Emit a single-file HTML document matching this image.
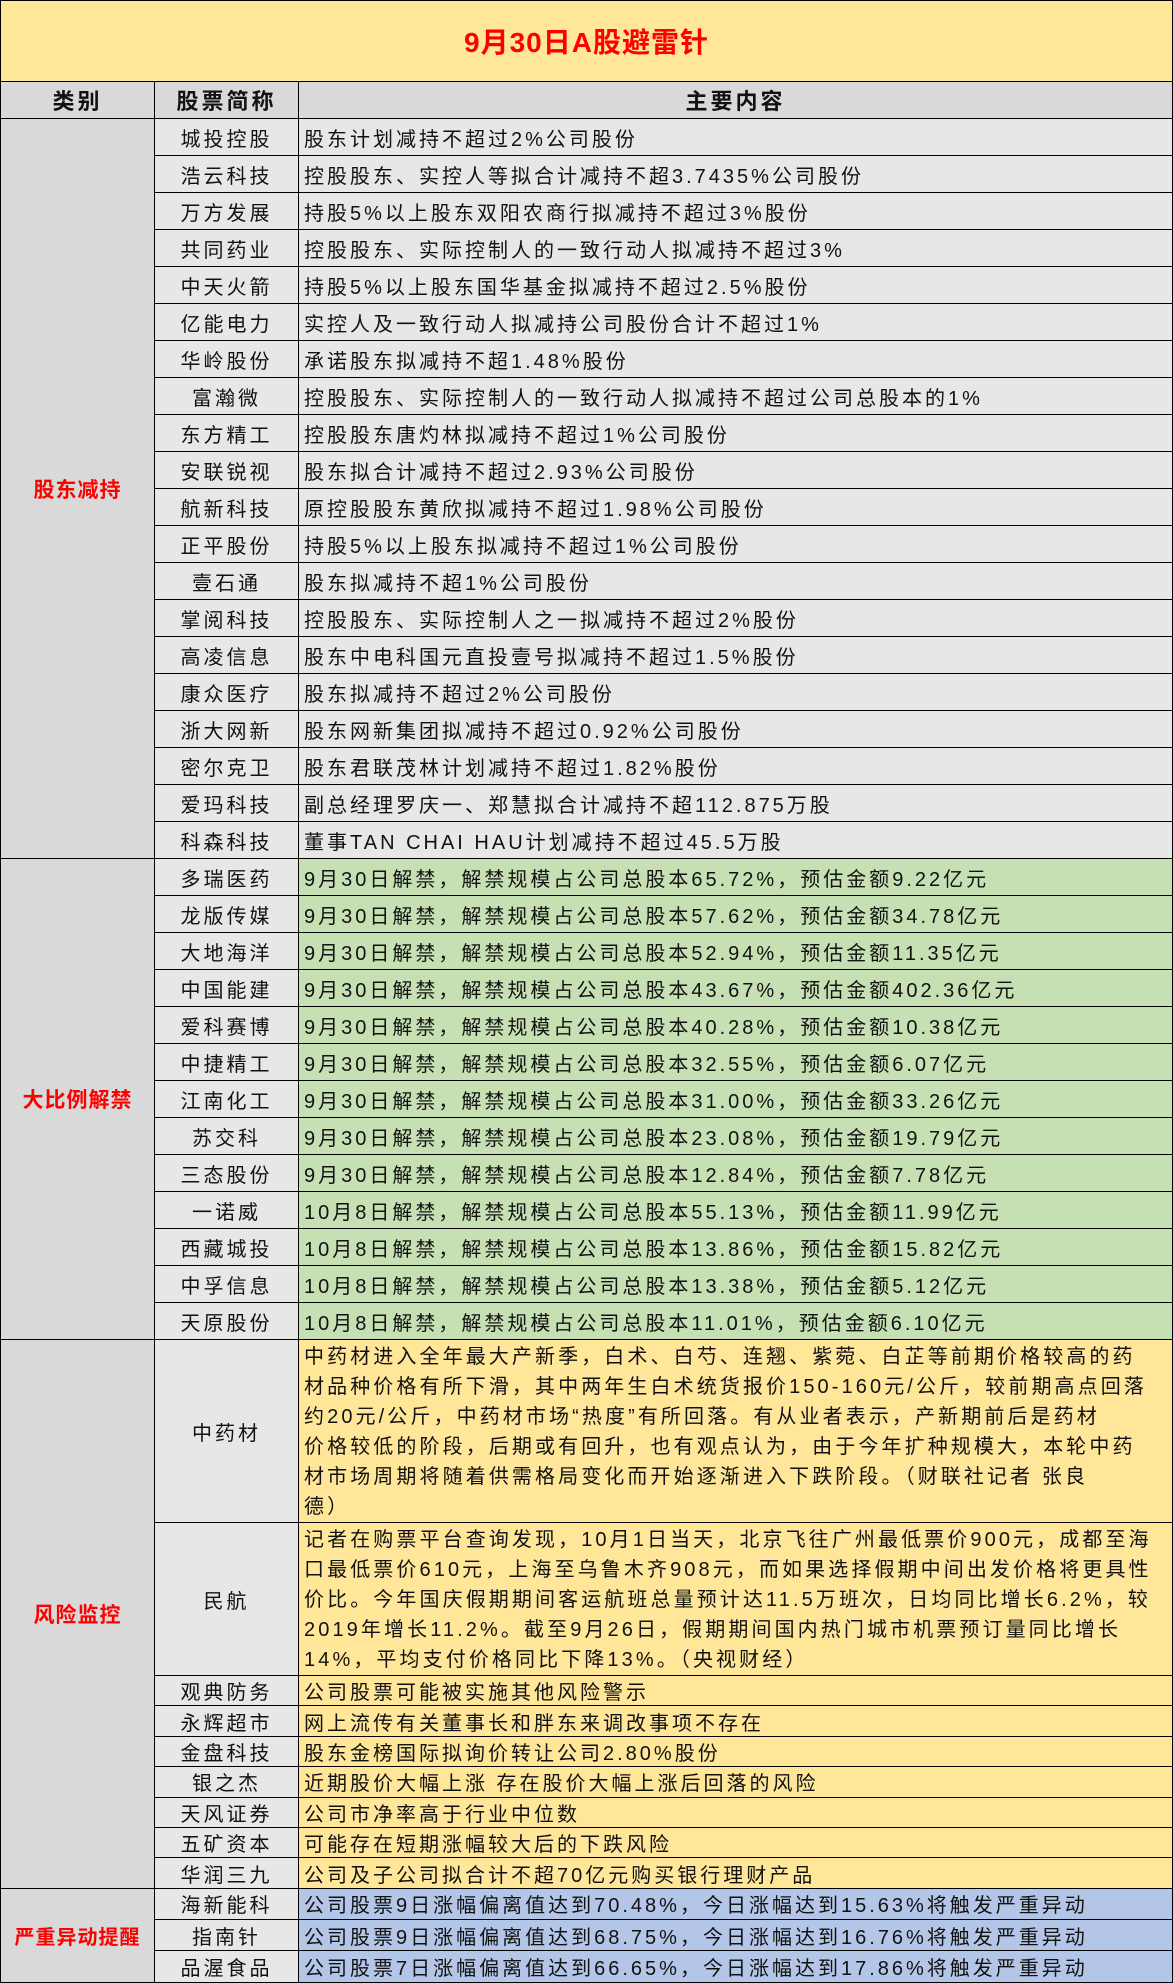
<!DOCTYPE html>
<html><head><meta charset="utf-8">
<style>
html,body{margin:0;padding:0;background:#fff;}
body{width:1173px;height:1974px;overflow:hidden;font-family:"Liberation Sans","Noto Sans CJK SC",sans-serif;}
table{border-collapse:collapse;table-layout:fixed;width:1172px;position:absolute;left:0;top:0;}
td{border:1.5px solid #000;padding:0;font-size:20px;color:#111;white-space:nowrap;overflow:hidden;letter-spacing:3px;}
.t{background:#ffe699;color:#f00;font-size:28px;font-weight:bold;text-align:center;height:80px;letter-spacing:1px;}
.h td{background:#d9d9d9;font-weight:bold;text-align:center;font-size:22px;height:36px;}
.c1{background:#d9d9d9;color:#f00;font-weight:bold;text-align:center;letter-spacing:1px;font-size:21px;}
.c2{background:#e7e7e7;text-align:center;}
.c3{padding-left:5px;}
.g{background:#e7e7e7}.gr{background:#c6e0b4}.y{background:#ffe699}.b{background:#b4c6e7}
tr.r37 td{height:36px}
tr.r30 td{height:29.4px}
tr.r31 td{height:30.3px}
.p{line-height:30px;padding:2px 0 0 5px;vertical-align:top;letter-spacing:3.1px;}
</style></head><body>
<table>
<colgroup><col style="width:154px"><col style="width:144px"><col style="width:874px"></colgroup>
<tr><td class="t" colspan="3">9月30日A股避雷针</td></tr>
<tr class="h"><td>类别</td><td>股票简称</td><td>主要内容</td></tr>
<tr class="r37"><td class="c1" rowspan="20">股东减持</td><td class="c2">城投控股</td><td class="c3 g">股东计划减持不超过2%公司股份</td></tr>
<tr class="r37"><td class="c2">浩云科技</td><td class="c3 g">控股股东、实控人等拟合计减持不超3.7435%公司股份</td></tr>
<tr class="r37"><td class="c2">万方发展</td><td class="c3 g">持股5%以上股东双阳农商行拟减持不超过3%股份</td></tr>
<tr class="r37"><td class="c2">共同药业</td><td class="c3 g">控股股东、实际控制人的一致行动人拟减持不超过3%</td></tr>
<tr class="r37"><td class="c2">中天火箭</td><td class="c3 g">持股5%以上股东国华基金拟减持不超过2.5%股份</td></tr>
<tr class="r37"><td class="c2">亿能电力</td><td class="c3 g">实控人及一致行动人拟减持公司股份合计不超过1%</td></tr>
<tr class="r37"><td class="c2">华岭股份</td><td class="c3 g">承诺股东拟减持不超1.48%股份</td></tr>
<tr class="r37"><td class="c2">富瀚微</td><td class="c3 g">控股股东、实际控制人的一致行动人拟减持不超过公司总股本的1%</td></tr>
<tr class="r37"><td class="c2">东方精工</td><td class="c3 g">控股股东唐灼林拟减持不超过1%公司股份</td></tr>
<tr class="r37"><td class="c2">安联锐视</td><td class="c3 g">股东拟合计减持不超过2.93%公司股份</td></tr>
<tr class="r37"><td class="c2">航新科技</td><td class="c3 g">原控股股东黄欣拟减持不超过1.98%公司股份</td></tr>
<tr class="r37"><td class="c2">正平股份</td><td class="c3 g">持股5%以上股东拟减持不超过1%公司股份</td></tr>
<tr class="r37"><td class="c2">壹石通</td><td class="c3 g">股东拟减持不超1%公司股份</td></tr>
<tr class="r37"><td class="c2">掌阅科技</td><td class="c3 g">控股股东、实际控制人之一拟减持不超过2%股份</td></tr>
<tr class="r37"><td class="c2">高凌信息</td><td class="c3 g">股东中电科国元直投壹号拟减持不超过1.5%股份</td></tr>
<tr class="r37"><td class="c2">康众医疗</td><td class="c3 g">股东拟减持不超过2%公司股份</td></tr>
<tr class="r37"><td class="c2">浙大网新</td><td class="c3 g">股东网新集团拟减持不超过0.92%公司股份</td></tr>
<tr class="r37"><td class="c2">密尔克卫</td><td class="c3 g">股东君联茂林计划减持不超过1.82%股份</td></tr>
<tr class="r37"><td class="c2">爱玛科技</td><td class="c3 g">副总经理罗庆一、郑慧拟合计减持不超112.875万股</td></tr>
<tr class="r37"><td class="c2">科森科技</td><td class="c3 g">董事TAN CHAI HAU计划减持不超过45.5万股</td></tr>
<tr class="r37"><td class="c1" rowspan="13">大比例解禁</td><td class="c2">多瑞医药</td><td class="c3 gr">9月30日解禁，解禁规模占公司总股本65.72%，预估金额9.22亿元</td></tr>
<tr class="r37"><td class="c2">龙版传媒</td><td class="c3 gr">9月30日解禁，解禁规模占公司总股本57.62%，预估金额34.78亿元</td></tr>
<tr class="r37"><td class="c2">大地海洋</td><td class="c3 gr">9月30日解禁，解禁规模占公司总股本52.94%，预估金额11.35亿元</td></tr>
<tr class="r37"><td class="c2">中国能建</td><td class="c3 gr">9月30日解禁，解禁规模占公司总股本43.67%，预估金额402.36亿元</td></tr>
<tr class="r37"><td class="c2">爱科赛博</td><td class="c3 gr">9月30日解禁，解禁规模占公司总股本40.28%，预估金额10.38亿元</td></tr>
<tr class="r37"><td class="c2">中捷精工</td><td class="c3 gr">9月30日解禁，解禁规模占公司总股本32.55%，预估金额6.07亿元</td></tr>
<tr class="r37"><td class="c2">江南化工</td><td class="c3 gr">9月30日解禁，解禁规模占公司总股本31.00%，预估金额33.26亿元</td></tr>
<tr class="r37"><td class="c2">苏交科</td><td class="c3 gr">9月30日解禁，解禁规模占公司总股本23.08%，预估金额19.79亿元</td></tr>
<tr class="r37"><td class="c2">三态股份</td><td class="c3 gr">9月30日解禁，解禁规模占公司总股本12.84%，预估金额7.78亿元</td></tr>
<tr class="r37"><td class="c2">一诺威</td><td class="c3 gr">10月8日解禁，解禁规模占公司总股本55.13%，预估金额11.99亿元</td></tr>
<tr class="r37"><td class="c2">西藏城投</td><td class="c3 gr">10月8日解禁，解禁规模占公司总股本13.86%，预估金额15.82亿元</td></tr>
<tr class="r37"><td class="c2">中孚信息</td><td class="c3 gr">10月8日解禁，解禁规模占公司总股本13.38%，预估金额5.12亿元</td></tr>
<tr class="r37"><td class="c2">天原股份</td><td class="c3 gr">10月8日解禁，解禁规模占公司总股本11.01%，预估金额6.10亿元</td></tr>
<tr><td class="c1" rowspan="9">风险监控</td><td class="c2" style="height:177px">中药材</td><td class="p y">中药材进入全年最大产新季，白术、白芍、连翘、紫菀、白芷等前期价格较高的药<br>材品种价格有所下滑，其中两年生白术统货报价150-160元/公斤，较前期高点回落<br>约20元/公斤，中药材市场“热度”有所回落。有从业者表示，产新期前后是药材<br>价格较低的阶段，后期或有回升，也有观点认为，由于今年扩种规模大，本轮中药<br>材市场周期将随着供需格局变化而开始逐渐进入下跌阶段。（财联社记者 张良<br>德）</td></tr>
<tr><td class="c2" style="height:148px">民航</td><td class="p y">记者在购票平台查询发现，10月1日当天，北京飞往广州最低票价900元，成都至海<br>口最低票价610元，上海至乌鲁木齐908元，而如果选择假期中间出发价格将更具性<br>价比。今年国庆假期期间客运航班总量预计达11.5万班次，日均同比增长6.2%，较<br>2019年增长11.2%。截至9月26日，假期期间国内热门城市机票预订量同比增长<br>14%，平均支付价格同比下降13%。（央视财经）</td></tr>
<tr class="r30"><td class="c2">观典防务</td><td class="c3 y">公司股票可能被实施其他风险警示</td></tr>
<tr class="r30"><td class="c2">永辉超市</td><td class="c3 y">网上流传有关董事长和胖东来调改事项不存在</td></tr>
<tr class="r30"><td class="c2">金盘科技</td><td class="c3 y">股东金榜国际拟询价转让公司2.80%股份</td></tr>
<tr class="r30"><td class="c2">银之杰</td><td class="c3 y">近期股价大幅上涨 存在股价大幅上涨后回落的风险</td></tr>
<tr class="r30"><td class="c2">天风证券</td><td class="c3 y">公司市净率高于行业中位数</td></tr>
<tr class="r30"><td class="c2">五矿资本</td><td class="c3 y">可能存在短期涨幅较大后的下跌风险</td></tr>
<tr class="r30"><td class="c2">华润三九</td><td class="c3 y">公司及子公司拟合计不超70亿元购买银行理财产品</td></tr>
<tr class="r31"><td class="c1" rowspan="3" style="font-size:20px">严重异动提醒</td><td class="c2">海新能科</td><td class="c3 b">公司股票9日涨幅偏离值达到70.48%，今日涨幅达到15.63%将触发严重异动</td></tr>
<tr class="r31"><td class="c2">指南针</td><td class="c3 b">公司股票9日涨幅偏离值达到68.75%，今日涨幅达到16.76%将触发严重异动</td></tr>
<tr class="r31"><td class="c2">品渥食品</td><td class="c3 b">公司股票7日涨幅偏离值达到66.65%，今日涨幅达到17.86%将触发严重异动</td></tr>
</table>
</body></html>
